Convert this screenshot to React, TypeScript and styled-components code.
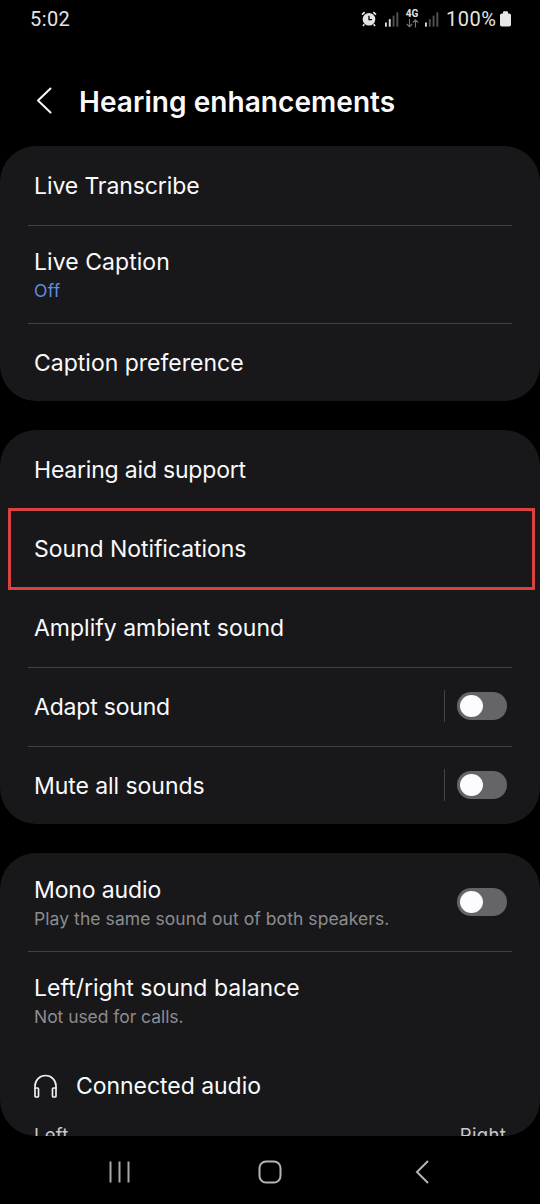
import React from "react";
import styled, { createGlobalStyle } from "styled-components";

const GlobalStyle = createGlobalStyle`
  * { box-sizing: border-box; }
  body { margin: 0; background: #000; }
`;

const Screen = styled.div`
  width: 540px;
  height: 1204px;
  overflow: hidden;
  display: flex;
  flex-direction: column;
  background: #000;
  color: #fafafc;
  font-family: Inter, "Liberation Sans", sans-serif;
`;

const StatusBar = styled.header`
  height: 38px;
  flex: none;
  padding: 0 29px 0 30px;
  display: flex;
  justify-content: space-between;
  color: #e4e4e4;
  font-family: Roboto, "Liberation Sans", sans-serif;
  font-size: 20px;
  line-height: 38px;
`;

const Clock = styled.span`
  letter-spacing: 0.4px;
`;

const StatusGroup = styled.div`
  display: flex;
  align-items: center;
`;

const AlarmIcon = styled.svg`
  margin-right: 8px;
`;

const Percent = styled.span`
  margin-left: 7px;
  width: 54px;
  letter-spacing: 0.5px;
`;

const Network = styled.div`
  width: 14px;
  height: 20px;
  margin: 0 6px;
  display: flex;
  flex-direction: column;
  align-items: center;
  font-size: 10px;
  font-weight: 700;
  line-height: 10px;
`;

const TitleBar = styled.div`
  height: 108px;
  flex: none;
  padding: 18px 0 0 36px;
  display: flex;
  align-items: flex-start;
`;

const BackIcon = styled.svg`
  flex: none;
  margin: 31px 27px 0 0;
`;

const Title = styled.h1`
  margin: 0;
  padding-top: 28px;
  font-size: 28px;
  line-height: 36px;
  font-weight: 600;
  letter-spacing: 0.06px;
  white-space: nowrap;
`;

const Content = styled.main`
  height: 990px;
  flex: none;
  display: flex;
  flex-direction: column;
  gap: 29px;
`;

const Card = styled.section<{ $height: number }>`
  height: ${(p) => p.$height}px;
  flex: none;
  padding: 0 28px;
  border-radius: 36px;
  background: #18181a;
  overflow: hidden;
`;

const Row = styled.div<{ $height?: number; $divided?: boolean }>`
  height: ${(p) => p.$height ?? 79}px;
  padding: ${(p) => (p.$divided ? 0 : 1)}px 5px 0 6px;
  display: flex;
  align-items: center;
  border-top: ${(p) => (p.$divided ? "1px solid #414143" : "0 solid transparent")};
`;

const HighlightedRow = styled(Row)`
  height: 82px;
  margin: -1px -23px -2px -20px;
  padding: 1px 26px 0 23px;
  border: 3px solid #d9433f;
`;

const Texts = styled.div<{ $double?: boolean }>`
  flex: 1;
  padding-top: ${(p) => (p.$double ? 2 : 0)}px;
  display: flex;
  flex-direction: column;
  gap: 1px;
`;

const Label = styled.span<{ $track?: number }>`
  font-size: 23px;
  line-height: 29px;
  letter-spacing: ${(p) => p.$track ?? 0}px;
  white-space: nowrap;
`;

const Note = styled.span<{ $accent?: boolean; $track?: number }>`
  font-size: 17.5px;
  line-height: 26px;
  letter-spacing: ${(p) => p.$track ?? 0}px;
  color: ${(p) => (p.$accent ? "#628be0" : "#8c8c90")};
  white-space: nowrap;
`;

const SwitchDivider = styled.span`
  width: 1px;
  height: 32px;
  margin: 0 12px 2px 0;
  background: #444447;
`;

const Switch = styled.span`
  width: 50px;
  height: 28px;
  margin-bottom: 2px;
  padding: 3px;
  border-radius: 14px;
  background: #656468;
`;

const Knob = styled.span`
  display: block;
  width: 23px;
  height: 22px;
  border-radius: 50%;
  background: #fcfbff;
`;

const ConnectedRow = styled.div`
  height: 74px;
  padding-left: 5px;
  display: flex;
  align-items: center;
  gap: 18px;
`;

const BalanceLabels = styled.div`
  padding: 0 6px;
  display: flex;
  justify-content: space-between;
  font-size: 18.5px;
  line-height: 24px;
  letter-spacing: 0.3px;
  color: #c9c9cb;
`;

const NavBar = styled.nav`
  height: 68px;
  flex: none;
  padding: 3px 110px 0 108px;
  display: flex;
  align-items: center;
`;

const HomeIcon = styled.svg`
  margin: 0 auto 0 126px;
`;

const Signal = ({ level }: { level: number }) => (
  <svg width="14" height="15" viewBox="0 0 14 15">
    {[0, 1, 2, 3].map((i) => (
      <rect key={i} x={i * 3.8} y={10.5 - i * 3.4} width="1.9" height={4.2 + i * 3.4} fill={i < level ? "#d8d8d8" : "#515151"} />
    ))}
  </svg>
);

const Toggle = () => (
  <Switch role="switch" aria-checked="false">
    <Knob />
  </Switch>
);

export default function App() {
  return (
    <Screen>
      <GlobalStyle />
      <StatusBar>
        <Clock>5:02</Clock>
        <StatusGroup>
          <AlarmIcon width="16" height="16" viewBox="0 0 16 16" fill="none">
            <path d="M1 3.7 3.7 1.1M15 3.7 12.3 1.1M3.3 13.2 2 15M12.7 13.2 14 15" stroke="#e4e4e4" strokeWidth="1.7" />
            <circle cx="8" cy="8.2" r="6.3" fill="#e4e4e4" />
            <path d="M8 4.8v3.8h3" stroke="#000" strokeWidth="1.3" />
          </AlarmIcon>
          <Signal level={2} />
          <Network>
            4G
            <svg width="13" height="9" viewBox="0 0 13 9" fill="none" stroke="#777" strokeWidth="1.1">
              <path d="M3.5 0v7.5M.8 5l2.7 2.8L6.2 5M9.5 8.5V1M6.8 3.7 9.5.9l2.7 2.8" />
            </svg>
          </Network>
          <Signal level={1} />
          <Percent>100%</Percent>
          <svg width="11" height="16" viewBox="0 0 11 16" fill="#e8e8e8">
            <path d="M3 1.2Q3 .3 4 .3h3q1 0 1 .9v1.200h1.200q1.800 0 1.800 1.800v9.500q0 1.800-1.800 1.800H1.800Q0 15.500 0 13.700V4.200q0-1.800 1.800-1.800H3z" />
          </svg>
        </StatusGroup>
      </StatusBar>
      <TitleBar>
        <BackIcon width="16" height="28" viewBox="0 0 16 28" fill="none" stroke="#fafafa" strokeWidth="2" strokeLinecap="round" strokeLinejoin="round">
          <path d="M14.500 1.500 2 13.500 14.500 25.500" />
        </BackIcon>
        <Title>Hearing enhancements</Title>
      </TitleBar>
      <Content>
        <Card $height={255}>
          <Row>
            <Label $track={-0.1}>Live Transcribe</Label>
          </Row>
          <Row $height={98} $divided>
            <Texts $double>
              <Label $track={0.05}>Live Caption</Label>
              <Note $accent $track={0.35}>Off</Note>
            </Texts>
          </Row>
          <Row $divided>
            <Label>Caption preference</Label>
          </Row>
        </Card>
        <Card $height={394}>
          <Row>
            <Label $track={-0.2}>Hearing aid support</Label>
          </Row>
          <HighlightedRow>
            <Label $track={-0.06}>Sound Notifications</Label>
          </HighlightedRow>
          <Row>
            <Label>Amplify ambient sound</Label>
          </Row>
          <Row $divided>
            <Texts>
              <Label $track={-0.2}>Adapt sound</Label>
            </Texts>
            <SwitchDivider />
            <Toggle />
          </Row>
          <Row $divided>
            <Texts>
              <Label $track={-0.06}>Mute all sounds</Label>
            </Texts>
            <SwitchDivider />
            <Toggle />
          </Row>
        </Card>
        <Card $height={283}>
          <Row $height={98}>
            <Texts $double>
              <Label $track={-0.12}>Mono audio</Label>
              <Note $track={0.07}>Play the same sound out of both speakers.</Note>
            </Texts>
            <Toggle />
          </Row>
          <Row $height={98} $divided>
            <Texts $double>
              <Label>Left/right sound balance</Label>
              <Note $track={-0.05}>Not used for calls.</Note>
            </Texts>
          </Row>
          <ConnectedRow>
            <svg width="25" height="25" viewBox="0 0 25 25" fill="none" stroke="#f0f0f2" strokeWidth="1.700">
              <path d="M2 15v-3a10.500 10.500 0 0 1 21 0v3" />
              <rect x="2" y="14" width="3.500" height="9" rx="1" />
              <rect x="19.500" y="14" width="3.500" height="9" rx="1" />
            </svg>
            <Label $track={-0.04}>Connected audio</Label>
          </ConnectedRow>
          <BalanceLabels>
            <span>Left</span>
            <span>Right</span>
          </BalanceLabels>
        </Card>
      </Content>
      <NavBar>
        <svg width="24" height="24" viewBox="0 0 24 24" stroke="#a8a8a8" strokeWidth="2">
          <path d="M2.500 1.500v21M11.500 1.500v21M20.500 1.500v21" />
        </svg>
        <HomeIcon width="24" height="24" viewBox="0 0 24 24" fill="none" stroke="#b4b4b4" strokeWidth="2">
          <rect x="1.500" y="1.500" width="21" height="21" rx="6.500" />
        </HomeIcon>
        <svg width="16" height="26" viewBox="0 0 16 26" fill="none" stroke="#b4b4b4" strokeWidth="2">
          <path d="M14 2 3 13l11 11" />
        </svg>
      </NavBar>
    </Screen>
  );
}
